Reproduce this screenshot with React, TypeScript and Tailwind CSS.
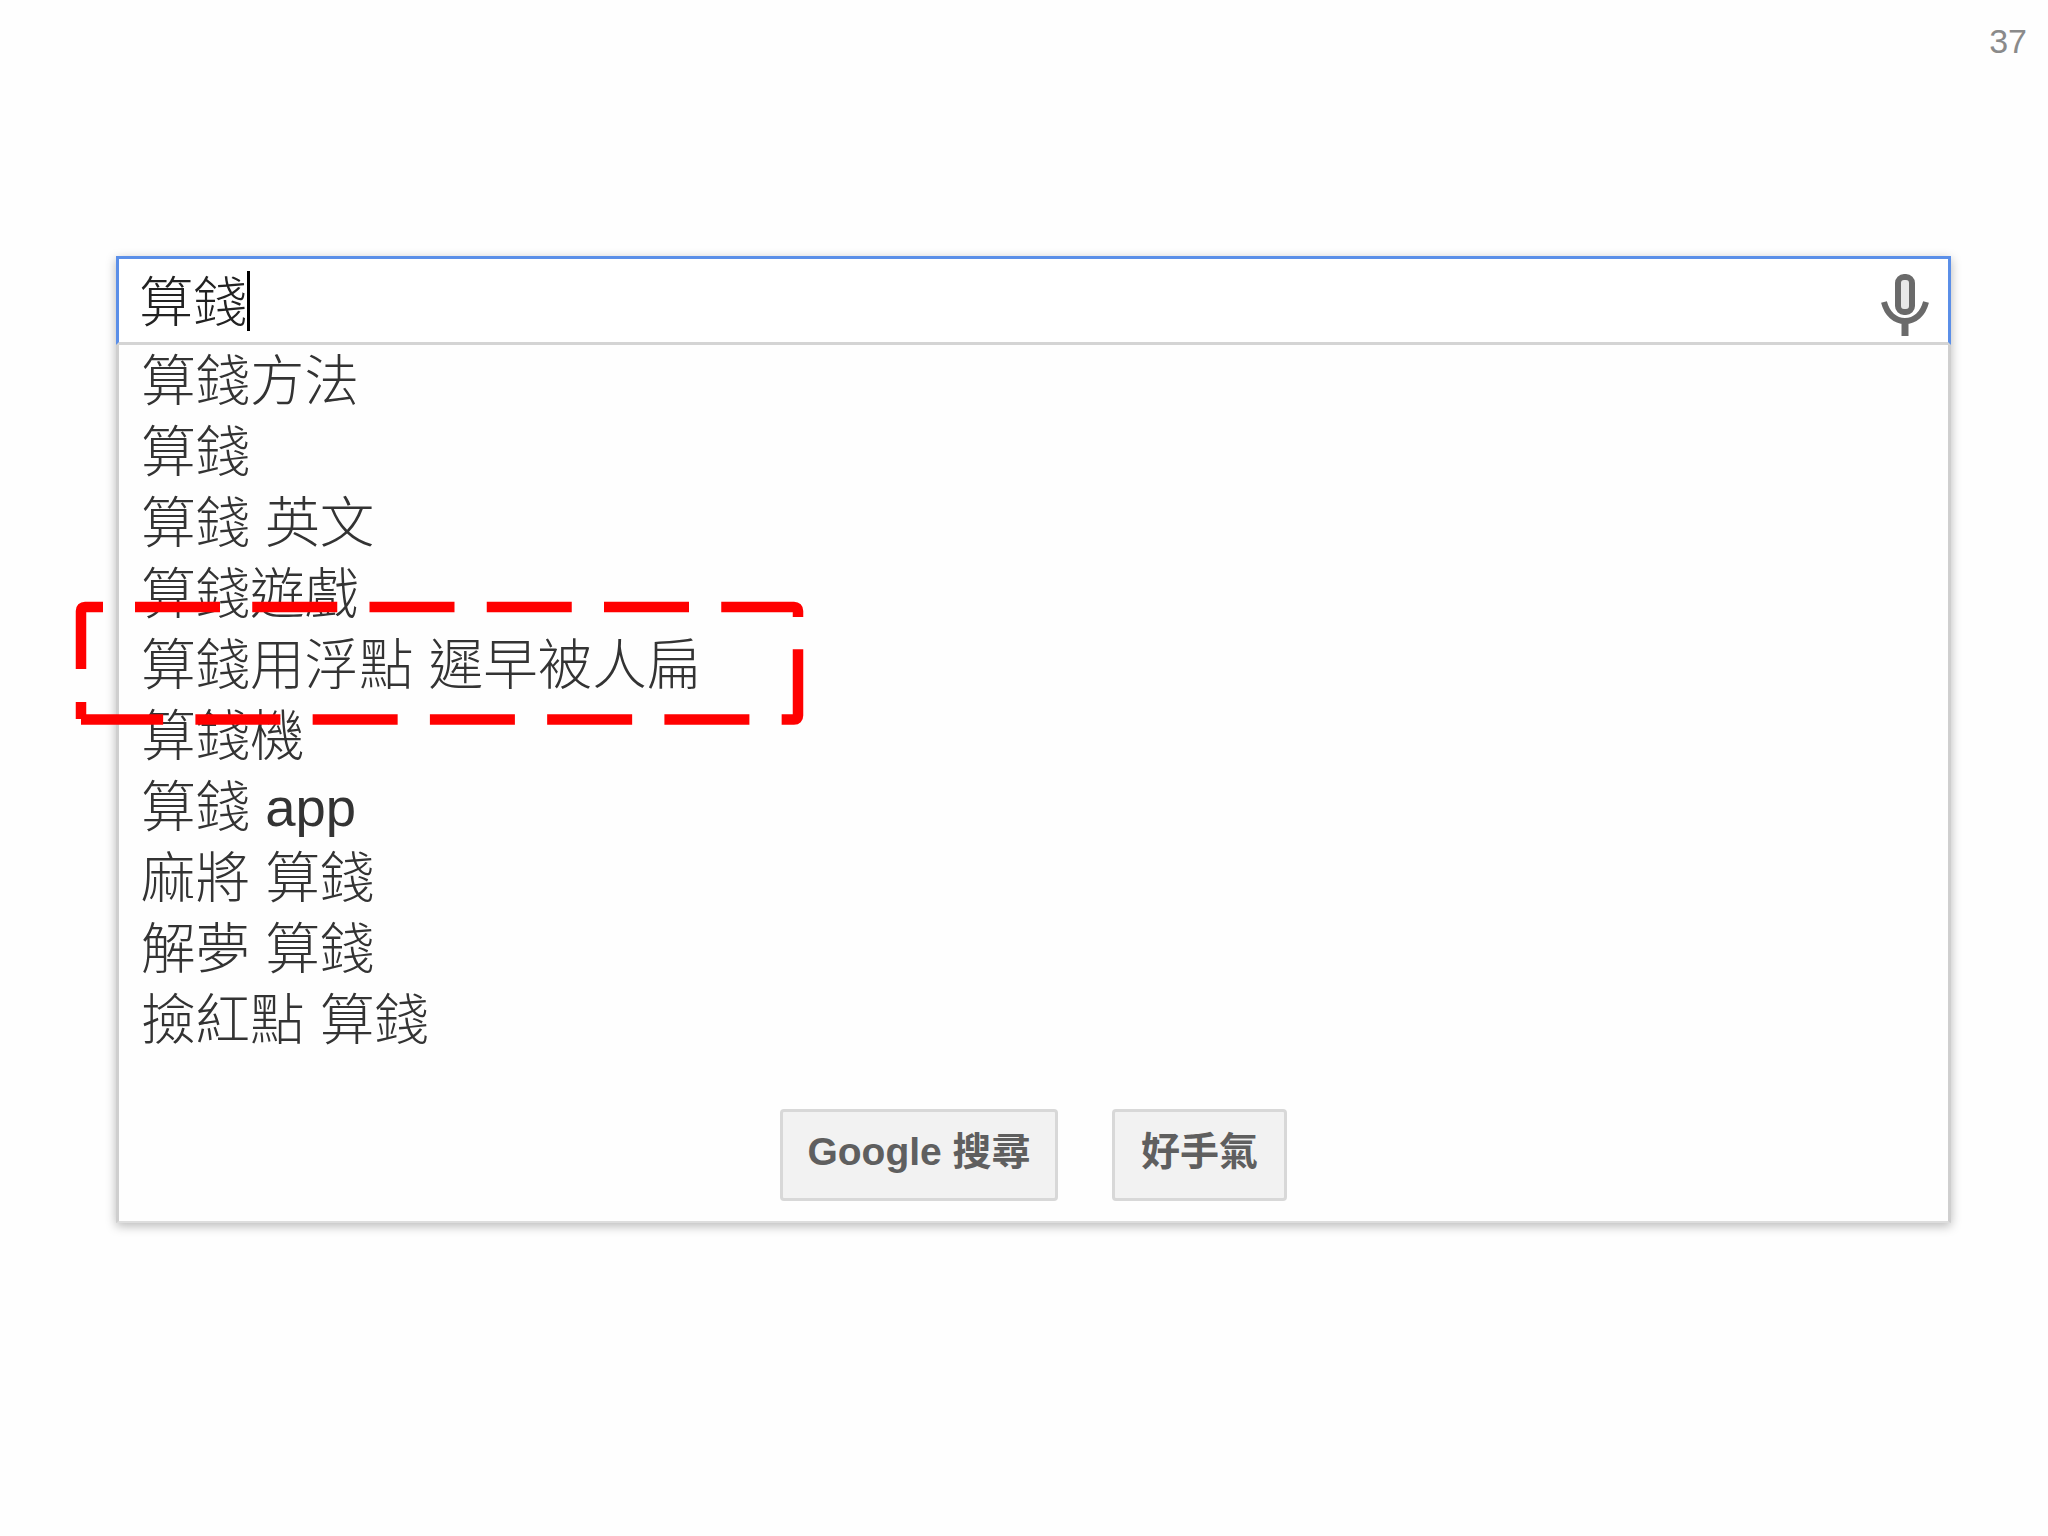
const suggestions = [
  '算錢方法',
  '算錢',
  '算錢 英文',
  '算錢遊戲',
  '算錢用浮點 遲早被人扁',
  '算錢機',
  '算錢 app',
  '麻將 算錢',
  '解夢 算錢',
  '撿紅點 算錢',
]

function MicIcon() {
  return (
    <svg width="48" height="64" viewBox="0 0 48 64" fill="none" stroke="#6a6a6a">
      <rect x="17" y="4" width="14" height="35" rx="6" strokeWidth="6" fill="#e8e8e8" />
      <path d="M3 29 C6 41 14 48 24 48 C34 48 42 41 45 29" strokeWidth="6" />
      <path d="M24 47 V63" strokeWidth="7" />
    </svg>
  )
}

function DashedBox() {
  return (
    <svg className="absolute left-[60px] top-[590px]" width="760" height="150" viewBox="0 0 760 150" fill="none" stroke="#ff0000" strokeWidth="10.5">
      <path d="M75 17 H734 Q738 17 738 21 V125.5 Q738 129.5 734 129.5 H21" strokeDasharray="85 32.25" />
      <path d="M43 17 H25 Q21 17 21 21 V79" />
      <path d="M21 112 V129" />
    </svg>
  )
}

export default function App() {
  return (
    <div className="relative w-[2048px] h-[1536px] bg-[#fefefe] overflow-hidden font-['Liberation_Sans','Noto_Sans_CJK_TC',sans-serif]">
      <div className="flex justify-end pr-[21px] pt-[21px] h-[256px]">
        <span className="text-[34px] leading-[40px] text-[#8a8a8a]">37</span>
      </div>

      <div className="ml-[116px] w-[1835px] shadow-[0_3px_10px_rgba(0,0,0,0.28)]">
        <div className="h-[89px] flex items-center justify-between border-[3px] border-[#5b8fe8] border-b-[#d4d4d4] bg-white pl-[20px] pr-[19px]">
          <div className="flex items-center">
            <span className="pt-[5px] text-[54px] leading-[60px] text-[#222222] font-light">算錢</span>
            <span className="w-[3px] h-[60px] bg-black" />
          </div>
          <div className="pt-[8px]">
            <MicIcon />
          </div>
        </div>

        <div className="h-[878px] border-x-[3px] border-x-[#cfcfcf] border-b-[2px] border-b-[#dddddd] bg-[#fefefe] pl-[22px] flex flex-col">
          {suggestions.map((s, i) => (
            <div key={i} className="h-[71px] shrink-0 flex items-center pt-[3px] text-[54.5px] text-[#333333] font-light whitespace-pre">
              {s}
            </div>
          ))}
          <div className="mt-[54px] flex justify-center gap-[54px] pr-[22px]">
            <button className="w-[278px] h-[92px] pb-[5px] rounded-[4px] border-[3px] border-[#d8d8d8] bg-[#f2f2f2] text-[39px] font-bold text-[#5f5f5f]">
              Google 搜尋
            </button>
            <button className="w-[175px] h-[92px] pb-[5px] rounded-[4px] border-[3px] border-[#d8d8d8] bg-[#f2f2f2] text-[39px] font-bold text-[#5f5f5f]">
              好手氣
            </button>
          </div>
        </div>
      </div>

      <DashedBox />
    </div>
  )
}
